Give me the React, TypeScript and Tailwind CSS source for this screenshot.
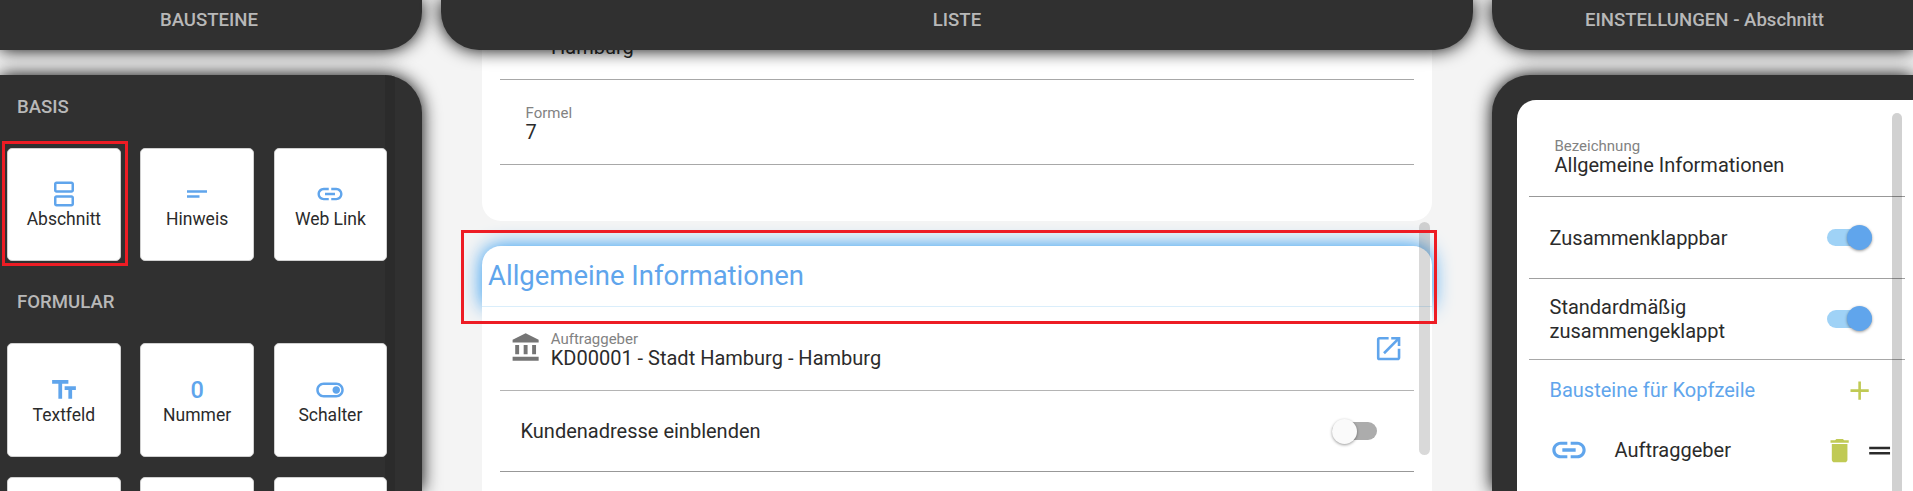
import type { ReactNode } from 'react';
import {
  MdAccountBalance,
  MdAdd,
  MdDelete,
  MdDragHandle,
  MdLink,
  MdOpenInNew,
  MdOutlineSplitscreen,
  MdOutlineToggleOn,
  MdShortText,
  MdTextFields,
} from 'react-icons/md';

const PANEL = 'bg-[#303030] shadow-[0_0_18px_#000]';

function PanelHeader({ children, className }: { children: ReactNode; className: string }) {
  return (
    <header
      className={`${PANEL} relative z-10 h-[50.4px] shrink-0 text-center text-[18.6px] leading-[40px] font-medium text-[#b8b8b8] ${className}`}
    >
      {children}
    </header>
  );
}

function Tile({ icon, label }: { icon?: ReactNode; label?: string }) {
  return (
    <div className="relative z-10 flex h-[113.75px] flex-col items-center justify-center rounded-[5px] border border-[#d0d0d0] bg-white text-[17.5px] leading-5 text-[#2b2b2b]">
      <span className="text-[30px] text-[#60a5ec]">{icon}</span>
      {label}
    </div>
  );
}

function SectionTitle({ children }: { children: ReactNode }) {
  return (
    <h2 className="h-[82px] pl-[17px] text-[18.6px] leading-[82px] font-medium text-[#b8b8b8]">{children}</h2>
  );
}

function Field({ label, value }: { label: string; value: string }) {
  return (
    <div>
      <div className="text-[15px] leading-4 text-[#828282]">{label}</div>
      <div className="text-[20px] leading-[23px] text-[#2b2b2b]">{value}</div>
    </div>
  );
}

function Toggle({ on = false }: { on?: boolean }) {
  return (
    <div
      className={`flex h-[17.5px] w-[45px] shrink-0 items-center rounded-full ${on ? 'justify-end bg-[#9fd2f6]' : 'bg-[#acacac]'}`}
    >
      <span
        className={`size-[25px] shrink-0 rounded-full shadow-[0_1px_3px_rgba(0,0,0,0.4)] ${on ? 'bg-[#60a5ec]' : 'bg-[#fafafa]'}`}
      />
    </div>
  );
}

export default function App() {
  return (
    <div className="relative flex h-[491px] w-[1913px] justify-between overflow-hidden bg-[#f4f4f4] font-[Roboto,sans-serif]">
      <aside className="flex w-[422px] flex-col gap-[25px]">
        <PanelHeader className="rounded-br-[38px] pr-[4px]">BAUSTEINE</PanelHeader>
        <div className={`${PANEL} relative flex-1 overflow-hidden rounded-tr-[38px]`}>
          <div className="absolute inset-y-0 left-[385px] w-[10px] bg-[#2b2b2b]" />
          <div className="-mt-[9.8px] h-[425px]">
            <SectionTitle>BASIS</SectionTitle>
            <div className="grid grid-cols-[repeat(3,113.75px)] gap-x-[19.5px] pl-[7px]">
              <Tile icon={<MdOutlineSplitscreen />} label="Abschnitt" />
              <Tile icon={<MdShortText />} label="Hinweis" />
              <Tile icon={<MdLink />} label="Web Link" />
            </div>
            <SectionTitle>FORMULAR</SectionTitle>
            <div className="grid grid-cols-[repeat(3,113.75px)] gap-[19.5px] pl-[7px]">
              <Tile icon={<MdTextFields />} label="Textfeld" />
              <Tile
                icon={<span className="block h-[30px] text-[23.5px] leading-[30px] font-medium">0</span>}
                label="Nummer"
              />
              <Tile icon={<MdOutlineToggleOn />} label="Schalter" />
              <Tile />
              <Tile />
              <Tile />
            </div>
          </div>
        </div>
      </aside>

      <main className="flex w-[1032px] flex-col">
        <PanelHeader className="rounded-b-[38px]">LISTE</PanelHeader>
        <div className="mx-[41px] h-[171px] shrink-0 rounded-b-[19px] bg-white pr-[18.5px] pl-[18px]">
          <div className="h-[29.5px] border-b border-[#a8a8a8] pl-[51px]">
            <div className="-mt-[15px] inline-block h-[30px] align-top text-[20px] leading-6 text-[#2b2b2b]">Hamburg</div>
          </div>
          <div className="h-[85px] border-b border-[#a8a8a8] pt-[25px] pl-[25.5px]">
            <Field label="Formel" value="7" />
          </div>
        </div>
        <section className="mx-[41px] mt-[25px] flex flex-1 flex-col">
          <h1 className="h-[59.6px] shrink-0 rounded-t-[19px] bg-white pl-[6px] text-[27.5px] leading-[60px] text-[#60a5ec] shadow-[0_0_20px_#2196f3]">
            Allgemeine Informationen
          </h1>
          <div className="relative flex-1 border-t border-[#daeefb] bg-white pr-[18.5px] pl-[18px]">
            <div className="flex h-[84px] items-start border-b border-[#b4b4b4] pt-[24px] pl-[10px]">
              <MdAccountBalance className="mt-[1px] size-[31.25px] text-[#757575]" />
              <div className="ml-[9.5px] flex-1">
                <Field label="Auftraggeber" value="KD00001 - Stadt Hamburg - Hamburg" />
              </div>
              <MdOpenInNew className="mt-[2px] mr-[9px] size-[31.25px] text-[#60a5ec]" />
            </div>
            <div className="flex h-[81.5px] items-center justify-between border-b border-[#989898] pr-[36.5px] pl-[20.5px] text-[20px] text-[#2b2b2b]">
              Kundenadresse einblenden
              <Toggle />
            </div>
          </div>
        </section>
      </main>

      <aside className="flex w-[421px] flex-col gap-[25px]">
        <PanelHeader className="rounded-bl-[38px] pl-[4px]">EINSTELLUNGEN - Abschnitt</PanelHeader>
        <div className={`${PANEL} flex-1 rounded-tl-[38px] pt-[25px] pl-[25px]`}>
          <div className="relative h-full rounded-tl-[19px] bg-white pr-[8px] pl-[12px] text-[20px] leading-6 text-[#2b2b2b]">
            <div className="h-[97px] border-b border-[#989898] pt-[37.3px] pl-[25.5px]">
              <Field label="Bezeichnung" value="Allgemeine Informationen" />
            </div>
            <div className="flex h-[81.5px] items-center justify-between border-b border-[#a0a0a0] pr-[33px] pl-[20.5px]">
              Zusammenklappbar
              <Toggle on />
            </div>
            <div className="flex h-[81px] items-center justify-between border-b border-[#a8a8a8] pr-[33px] pl-[20.5px]">
              <span className="w-[200px]">Standardmäßig zusammengeklappt</span>
              <Toggle on />
            </div>
            <div className="flex h-[60.5px] items-center justify-between pr-[30px] pl-[20.5px] text-[#60a5ec]">
              Bausteine für Kopfzeile
              <MdAdd className="size-[31.25px] text-[#c0ca54]" />
            </div>
            <div className="flex h-[59.5px] items-center pl-[20.5px]">
              <MdLink className="-ml-[0.5px] size-[40px] text-[#60a5ec]" />
              <span className="ml-[25.5px] flex-1">Auftraggeber</span>
              <MdDelete className="mr-[9px] size-[31.25px] text-[#c0ca54]" />
              <MdDragHandle className="mr-[10px] size-[31.25px]" />
            </div>
            <div className="absolute top-[13px] right-[11px] bottom-0 w-[10px] rounded-t-full bg-black/18" />
          </div>
        </div>
      </aside>

      <div className="absolute top-[222px] left-[1419px] h-[233px] w-[10.5px] rounded-full bg-black/15" />
      <div className="absolute top-[141px] left-[1.5px] z-20 h-[125px] w-[126.5px] border-3 border-[#ed1c24]" />
      <div className="absolute top-[229.5px] left-[461px] z-20 h-[94px] w-[976px] border-3 border-[#ed1c24]" />
    </div>
  );
}
